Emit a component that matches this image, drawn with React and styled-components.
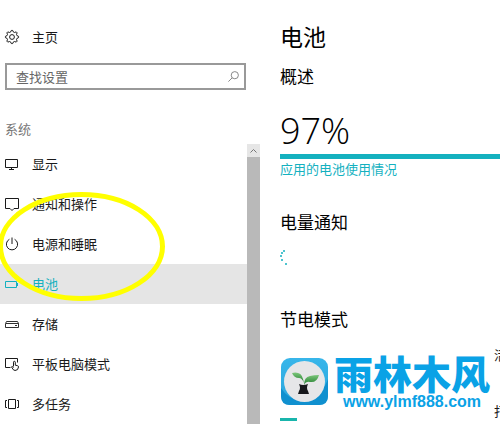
import React, { useState } from "react";
import styled, { createGlobalStyle } from "styled-components";

const GlobalStyle = createGlobalStyle`
  * {
    box-sizing: border-box;
  }

  body {
    margin: 0;
    background-color: white;
    color: #1a1a1a;
    font-family: "Noto Sans CJK SC", sans-serif;
    font-size: 13px;
    line-height: 20px;
  }
`;

const Container = styled.div`
  position: relative;
  display: flex;
  height: 100vh;
  overflow: hidden;
`;

const Sidebar = styled.aside`
  width: 260px;
  flex-shrink: 0;
  display: flex;
  flex-direction: column;
  padding-top: 27px;
`;

const IconBox = styled.span`
  display: flex;
  width: 14px;
  height: 14px;
  flex-shrink: 0;

  svg {
    width: 100%;
    height: 100%;
    fill: none;
    stroke: currentColor;
    overflow: visible;
  }
`;

const Home = styled.a`
  display: flex;
  align-items: center;
  gap: 13px;
  padding-left: 5px;
  color: inherit;
  text-decoration: none;
`;

const Search = styled.label`
  display: flex;
  align-items: center;
  height: 27px;
  margin: 16px 14px 0 5px;
  padding: 0 5px 0 9px;
  border: 2px solid #999;
  color: #888;
`;

const SearchInput = styled.input`
  flex: 1;
  min-width: 0;
  padding: 0;
  border: none;
  outline: none;
  background: none;
  font: inherit;
  color: #333;

  &::placeholder {
    color: #666;
    opacity: 1;
  }
`;

const Category = styled.h2`
  margin: 29px 0 5px;
  padding-left: 5px;
  font-size: 13px;
  font-weight: 400;
  color: #767676;
`;

const ListWrapper = styled.div`
  flex: 1;
  min-height: 0;
  display: flex;
`;

const List = styled.nav`
  flex: 1;
  overflow: hidden;
`;

const Item = styled.a`
  display: flex;
  align-items: center;
  gap: 13px;
  height: 40px;
  padding-left: 5px;
  text-decoration: none;
  color: ${props => (props.$active ? "#14b1bf" : "inherit")};
  background-color: ${props => (props.$active ? "#e5e5e5" : "transparent")};
`;

const ScrollBar = styled.div`
  width: 13px;
  display: flex;
  flex-direction: column;
  background-color: #b9b9b9;
`;

const ScrollButton = styled.button`
  display: flex;
  align-items: center;
  justify-content: center;
  height: 13px;
  padding: 0;
  border: none;
  background-color: #e6e6e6;
  color: #777;
`;

const Main = styled.main`
  flex: 1;
  min-width: 0;
  padding: 20px 0 0 20px;
`;

const Title = styled.h1`
  margin: 0;
  font-size: 23px;
  font-weight: 400;
  line-height: 32px;
  color: black;
`;

const Section = styled.section`
  margin-top: ${props => props.$top}px;
`;

const SubTitle = styled.h2`
  margin: 0;
  font-size: 17px;
  font-weight: 400;
  line-height: 24px;
  color: black;
`;

const Percent = styled.div`
  margin: 23px 0 3px;
  font-family: "Open Sans", sans-serif;
  font-size: 36px;
  font-weight: 300;
  line-height: 40px;
  color: black;
`;

const Bar = styled.div`
  height: 5px;
  background-color: #14b1bf;
`;

const UsageLink = styled.a`
  display: block;
  line-height: 19px;
  color: #14b1bf;
  text-decoration: none;
`;

const Spinner = styled.svg`
  display: block;
  width: 16px;
  height: 16px;
  margin-top: 16px;
  fill: #14b1bf;
`;

const Option = styled.div`
  display: grid;
  grid-template-columns: 1fr 6px;
  height: 20px;
  margin-top: ${props => props.$top}px;
`;

const OptionText = styled.span`
  grid-column: 2;
  overflow: hidden;
  white-space: nowrap;
`;

const Level = styled.div`
  width: 17px;
  height: 3px;
  align-self: end;
  grid-row: 1;
  background-color: #19b5ac;
`;

const Circle = styled.svg`
  position: absolute;
  left: 0;
  top: 190px;
  width: 168px;
  height: 114px;
  fill: none;
  stroke: #ffff00;
  stroke-width: 5;
  pointer-events: none;
`;

const Watermark = styled.div`
  position: absolute;
  left: 280px;
  top: 350px;
  display: flex;
  align-items: center;
  gap: 5px;
`;

const Logo = styled.svg`
  width: 49px;
  height: 49px;
  margin-top: 2px;
`;

const Brand = styled.div`
  display: flex;
  flex-direction: column;
  align-items: center;
  color: #0aa2e6;
`;

const BrandName = styled.strong`
  font-size: 39px;
  font-weight: 900;
  line-height: 44px;
`;

const BrandUrl = styled.span`
  font-family: "Liberation Sans", sans-serif;
  font-size: 16px;
  font-weight: 700;
  line-height: 16px;
`;

// teeth of the gear are built from points around the centre
const gearPoints = Array.from({ length: 32 }, (_, i) => {
  const r = i % 4 < 2 ? 6.6 : 5.1;
  const a = ((i - 0.5) * Math.PI) / 16;
  return `${(7 + r * Math.cos(a)).toFixed(2)},${(7 + r * Math.sin(a)).toFixed(2)}`;
}).join(" ");

const icons = {
  gear: (
    <>
      <polygon points={gearPoints} strokeLinejoin="round" />
      <circle cx="7" cy="7" r="2.4" />
    </>
  ),
  display: <path d="M.5 2.5h12v8H.5zM6.5 10.5v2M4 12.5h5" />,
  message: <path d="M.5 1.5h13v10H9L7 13.5 5 11.5H.5z" />,
  power: <path d="M7 .5v6.5M4.4 2.3a5.6 5.6 0 1 0 5.2 0" />,
  battery: <path d="M.5 4.5h11v6H.5zM12.5 6v3" />,
  storage: <path d="M.5 6.5l1-2h11l1 2v4H.5zM1 6.5h12.5M10 8.5h2" strokeWidth=".9" />,
  tablet: (
    <>
      <path d="M5.5 10.5h-5v-9h12v4" />
      <path d="M8.5 9.5V5.2a.9.9 0 0 1 1.8 0v3l2.3.5q1 .3.9 1.3-.2 3.5-3.5 3.5-2 0-3.5-3.7.6-1 2 .7" />
    </>
  ),
  task: <path d="M3.5 2.5h7v9h-7zM2 3.5H.5v7H2M12 3.5h1.5v7H12" />,
};

const menu = [
  { icon: "display", label: "显示" },
  { icon: "message", label: "通知和操作" },
  { icon: "power", label: "电源和睡眠" },
  { icon: "battery", label: "电池" },
  { icon: "storage", label: "存储" },
  { icon: "tablet", label: "平板电脑模式" },
  { icon: "task", label: "多任务" },
];

const Icon = ({ name }) => (
  <IconBox>
    <svg viewBox="0 0 14 14" aria-hidden="true">
      {icons[name]}
    </svg>
  </IconBox>
);

const App = () => {
  const [active, setActive] = useState("battery");
  const [query, setQuery] = useState("");

  return (
    <>
      <GlobalStyle />
      <Container>
        <Sidebar>
          <Home href="#home">
            <Icon name="gear" />
            主页
          </Home>
          <Search>
            <SearchInput
              aria-label="查找设置"
              placeholder="查找设置"
              value={query}
              onChange={e => setQuery(e.target.value)}
            />
            <svg width="11" height="11" viewBox="0 0 11 11" fill="none" stroke="currentColor">
              <circle cx="6.8" cy="4.2" r="3.6" />
              <path d="M4.2 6.8L.4 10.6" />
            </svg>
          </Search>
          <Category>系统</Category>
          <ListWrapper>
            <List>
              {menu.map(item => (
                <Item
                  key={item.icon}
                  href={`#${item.icon}`}
                  $active={item.icon === active}
                  onClick={() => setActive(item.icon)}
                >
                  <Icon name={item.icon} />
                  {item.label}
                </Item>
              ))}
            </List>
            <ScrollBar>
              <ScrollButton aria-label="向上滚动">
                <svg width="7" height="4" viewBox="0 0 7 4" fill="none" stroke="currentColor">
                  <path d="M.5 3.5l3-3 3 3" />
                </svg>
              </ScrollButton>
            </ScrollBar>
          </ListWrapper>
        </Sidebar>

        <Main>
          <Title>电池</Title>
          <Section $top={12}>
            <SubTitle>概述</SubTitle>
            <Percent>97%</Percent>
            <Bar />
            <UsageLink href="#usage">应用的电池使用情况</UsageLink>
          </Section>
          <Section $top={32}>
            <SubTitle>电量通知</SubTitle>
            <Spinner viewBox="0 0 16 16">
              <circle cx="4" cy="1" r="1" />
              <circle cx="2" cy="3" r="1" />
              <circle cx="1" cy="6" r="1" />
              <circle cx="2" cy="10" r="1" />
              <circle cx="6" cy="14" r="1" />
            </Spinner>
          </Section>
          <Section $top={41}>
            <SubTitle>节电模式</SubTitle>
            <Option $top={14}>
              <OptionText>活</OptionText>
            </Option>
            <Option $top={36}>
              <Level />
              <OptionText>打</OptionText>
            </Option>
          </Section>
        </Main>

        <Circle viewBox="0 0 168 114">
          <ellipse cx="81.5" cy="56.5" rx="81" ry="52" />
        </Circle>

        <Watermark>
          <Logo viewBox="0 0 49 49">
            <defs>
              <linearGradient id="tile" x1="0" y1="0" x2="0" y2="1">
                <stop offset="0" stopColor="#38b6ea" />
                <stop offset="1" stopColor="#2aa5dc" />
              </linearGradient>
              <linearGradient id="leaf" x1="0" y1="0" x2="0" y2="1">
                <stop offset="0" stopColor="#7cc67a" />
                <stop offset="1" stopColor="#1e7a2c" />
              </linearGradient>
            </defs>
            <rect x="1" y="1" width="47" height="47" rx="9" fill="url(#tile)" />
            <path d="M1 31Q10 46 28 42 42 38 48 22v17q0 9-9 9H10q-9 0-9-9z" fill="#1090cf" />
            <circle cx="24.5" cy="24.5" r="20.5" fill="#e6e6e8" />
            <path d="M12 16q9-2 11 6l1 4q-2-5-5-5-5 0-7-5z" fill="url(#leaf)" />
            <path d="M39 18q-2 8-9 7-4-1-6 3 0-8 6-9 4-1 9-1z" fill="url(#leaf)" />
            <path d="M19 27q4 2 9 0-2 4 0 7l1 3H18l1-3q2-3 0-7z" fill="#17181c" />
          </Logo>
          <Brand>
            <BrandName>雨林木风</BrandName>
            <BrandUrl>www.ylmf888.com</BrandUrl>
          </Brand>
        </Watermark>
      </Container>
    </>
  );
};

export default App;
